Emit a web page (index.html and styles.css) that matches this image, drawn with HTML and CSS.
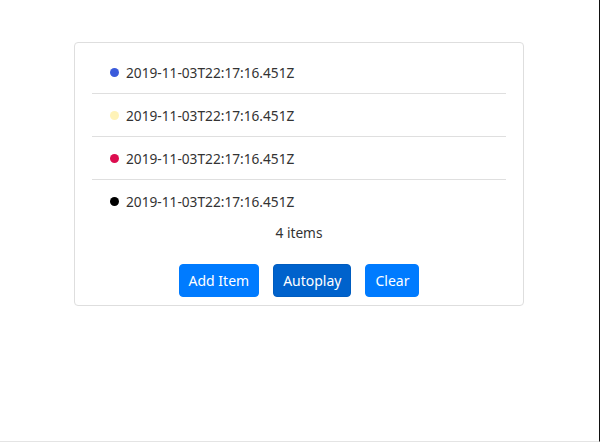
FILE: index.html
```html
<!DOCTYPE html>
<html>
<head>
<meta charset="utf-8">
<link rel="stylesheet" href="styles.css">
</head>
<body>
<div class="page">
  <div class="card">
    <ul class="list">
      <li class="item"><span class="dot dot-blue"></span><span class="stamp">2019-11-03T22:17:16.451Z</span></li>
      <li class="item"><span class="dot dot-yellow"></span><span class="stamp">2019-11-03T22:17:16.451Z</span></li>
      <li class="item"><span class="dot dot-red"></span><span class="stamp">2019-11-03T22:17:16.451Z</span></li>
      <li class="item"><span class="dot dot-black"></span><span class="stamp">2019-11-03T22:17:16.451Z</span></li>
    </ul>
    <div class="count">4 items</div>
    <div class="actions">
      <button class="btn">Add Item</button>
      <button class="btn btn-active">Autoplay</button>
      <button class="btn">Clear</button>
    </div>
  </div>
</div>
</body>
</html>
```

FILE: styles.css
```css
html, body {
  margin: 0;
  padding: 0;
  background: #fff;
}
body {
  font-family: "Noto Sans", "Open Sans", sans-serif;
  color: #333;
}
.page {
  width: 600px;
  height: 442px;
  box-sizing: border-box;
  border-right: 1px solid #111;
  border-bottom: 1px solid #e4e4e4;
  padding-top: 42px;
  padding-left: 74px;
}
.card {
  width: 450px;
  height: 264px;
  box-sizing: border-box;
  border: 1px solid #dedede;
  border-radius: 4px;
  padding: 8px 17px 0 17px;
}
.list {
  list-style: none;
  margin: 0;
  padding: 0;
}
.item {
  display: flex;
  align-items: center;
  height: 42px;
  padding-left: 18px;
  border-bottom: 1px solid #dfdfdf;
  font-size: 13.7px;
}
.item:last-child {
  border-bottom: none;
}
.dot {
  width: 9px;
  height: 9px;
  border-radius: 50%;
  margin-right: 7px;
}
.dot-blue { background: #3b5bdb; }
.dot-yellow { background: #fff3b8; }
.dot-red { background: #dc0d4f; }
.dot-black { background: #000; }
.count {
  text-align: center;
  font-size: 13.7px;
  margin-top: 0;
  height: 22px;
  line-height: 22px;
}
.actions {
  display: flex;
  justify-content: center;
  gap: 14px;
  margin-top: 20px;
}
.btn {
  font-family: "Noto Sans", "Open Sans", sans-serif;
  font-size: 14px;
  color: #fff;
  background: #007bff;
  border: 1px solid #007bff;
  border-radius: 4px;
  height: 33px;
  padding: 0 9px;
}
.btn-active {
  background: #0062cc;
  border-color: #005cbf;
}
```
